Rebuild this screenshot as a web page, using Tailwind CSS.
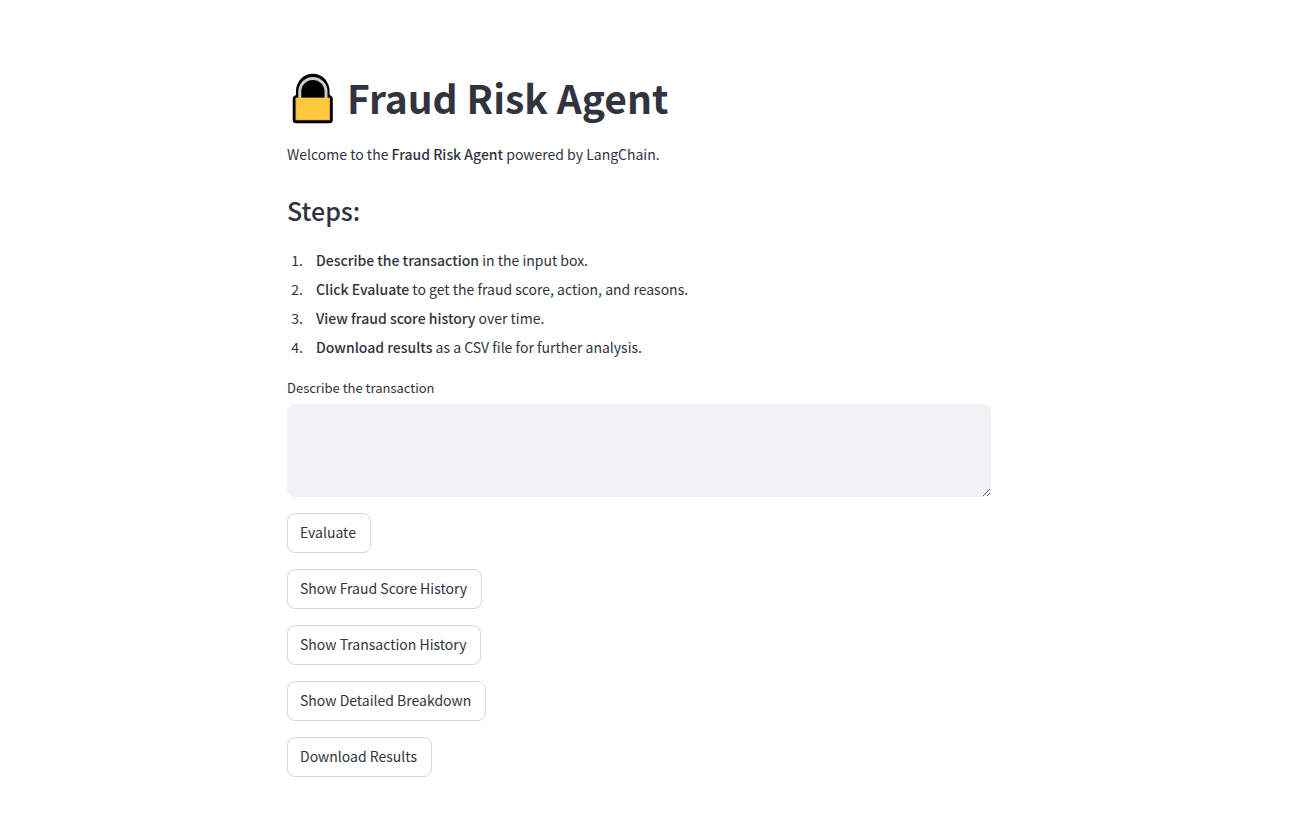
<!DOCTYPE html>
<html lang="en">
<head>
<meta charset="utf-8">
<meta name="viewport" content="width=device-width, initial-scale=1">
<title>Fraud Risk Agent</title>
<script src="https://cdn.jsdelivr.net/npm/@tailwindcss/browser@4"></script>
</head>
<body class="bg-white pr-[26px] font-['Noto_Sans_CJK_SC','Noto_Sans_CJK_JP',sans-serif] text-sm text-[#31333f]">
<main class="mx-auto flex max-w-[736px] flex-col px-4 pt-[72px] pb-12">
  <h1 class="flex items-center gap-[13px] text-[39px] leading-[50px] font-bold">
    <svg class="ml-1 h-[52px] w-[43px] shrink-0" viewBox="0 0 43 52" aria-hidden="true">
      <path d="M5 23V19A16.800 17.300 0 0 1 38.600 19V23Q41.800 24 41.800 27V48Q41.800 51.200 38.600 51.200H4.900Q1.700 51.200 1.700 48V27Q1.700 24 5 23Z" fill="#000"/>
      <path d="M8.800 26V19.500A13.100 13.100 0 0 1 35 19.500V26" fill="none" stroke="#ccc" stroke-width="3"/>
      <rect x="4.500" y="25.800" width="34.500" height="22.400" rx="0.500" fill="#f2a72e"/>
      <rect x="5.500" y="25.800" width="32.500" height="21.800" fill="#ffc83d"/>
    </svg>
    <span class="pb-0.5">Fraud Risk Agent</span>
  </h1>
  <p class="mt-[18px] leading-6">Welcome to the <strong class="font-medium">Fraud Risk Agent</strong> powered by LangChain.</p>
  <h2 class="mt-[26px] text-[25px] leading-9 font-medium">Steps:</h2>
  <ol class="mt-[18px] list-outside list-decimal pl-[19px] leading-[29px]">
    <li class="pl-[10px]"><strong class="font-medium">Describe the transaction</strong> in the input box.</li>
    <li class="pl-[10px]"><strong class="font-medium">Click Evaluate</strong> to get the fraud score, action, and reasons.</li>
    <li class="pl-[10px]"><strong class="font-medium">View fraud score history</strong> over time.</li>
    <li class="pl-[10px]"><strong class="font-medium">Download results</strong> as a CSV file for further analysis.</li>
  </ol>
  <label for="transaction" class="mt-[14px] text-[13px] leading-6">Describe the transaction</label>
  <textarea id="transaction" class="mt-1 block h-[93px] w-full resize-y rounded-lg bg-[#f0f2f6] p-3 outline-none"></textarea>
  <div class="mt-4 flex flex-col items-start gap-4">
    <button type="button" class="h-10 rounded-lg border border-[#d6d6d8] bg-white pr-3.5 pb-0.5 pl-3">Evaluate</button>
    <button type="button" class="h-10 rounded-lg border border-[#d6d6d8] bg-white pr-3.5 pb-0.5 pl-3">Show Fraud Score History</button>
    <button type="button" class="h-10 rounded-lg border border-[#d6d6d8] bg-white pr-3.5 pb-0.5 pl-3">Show Transaction History</button>
    <button type="button" class="h-10 rounded-lg border border-[#d6d6d8] bg-white pr-3.5 pb-0.5 pl-3">Show Detailed Breakdown</button>
    <button type="button" class="h-10 rounded-lg border border-[#d6d6d8] bg-white pr-3.5 pb-0.5 pl-3">Download Results</button>
  </div>
</main>
</body>
</html>
